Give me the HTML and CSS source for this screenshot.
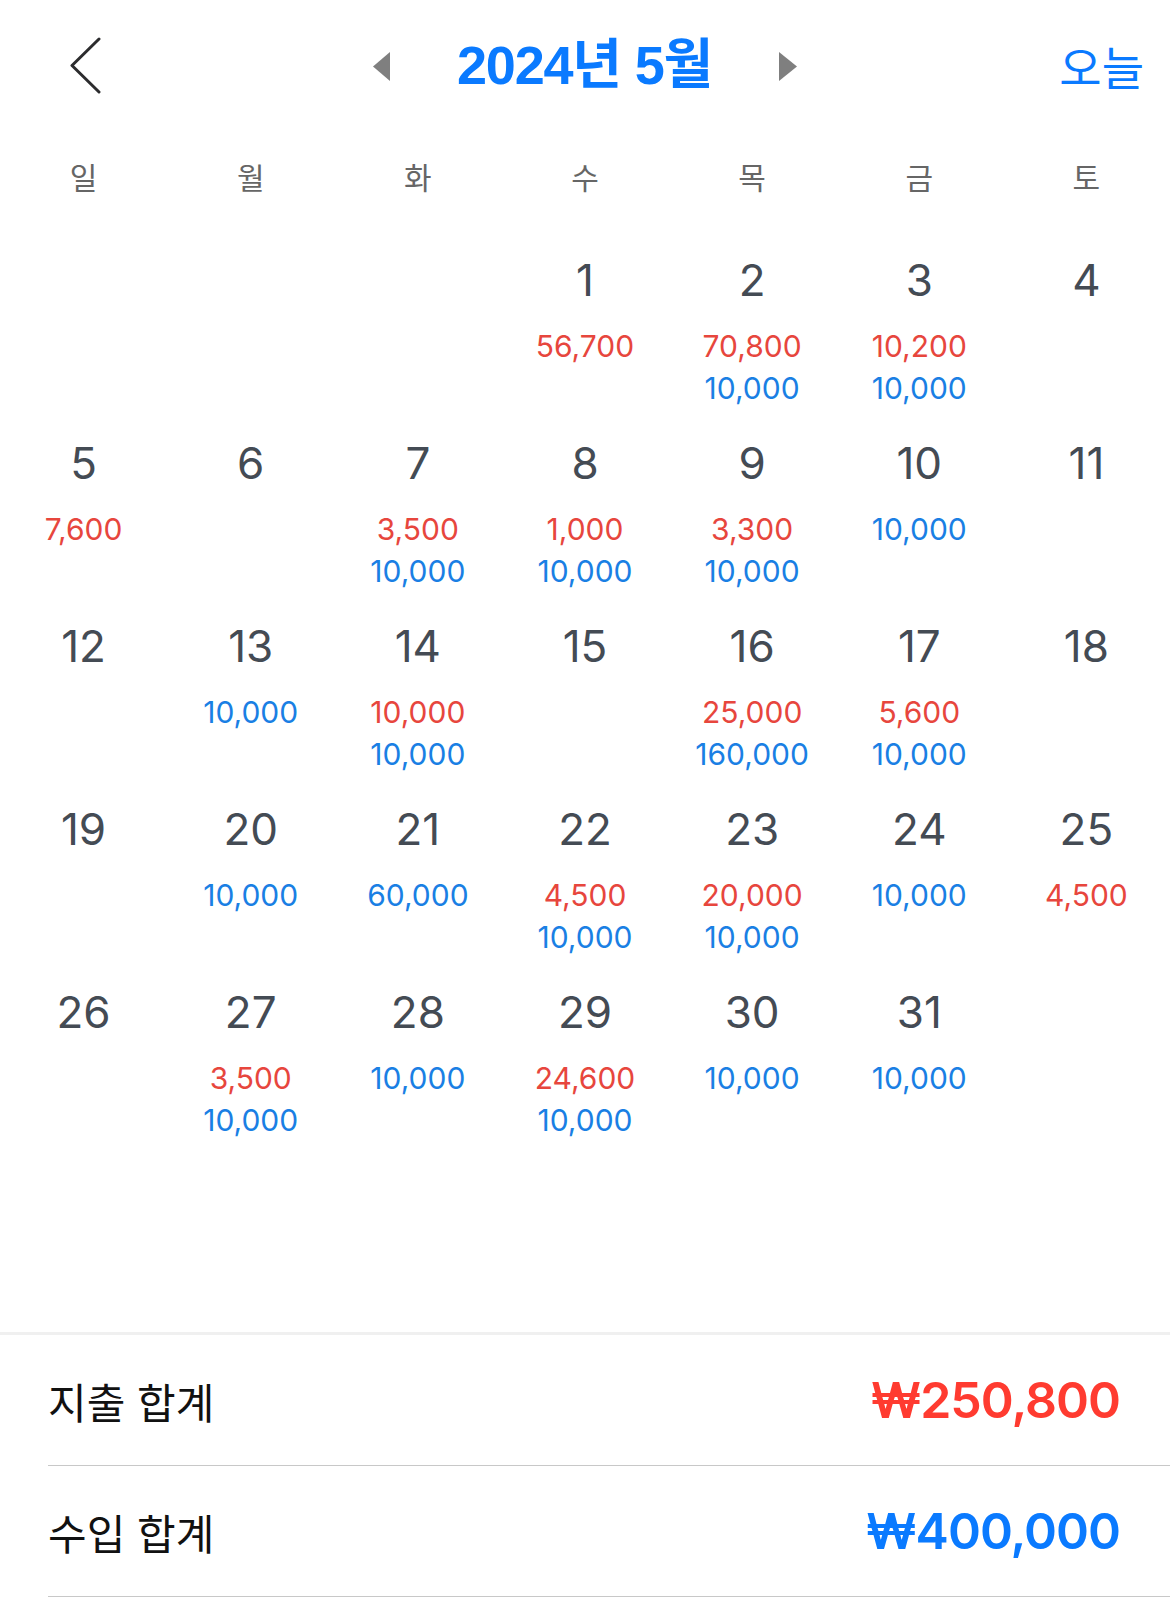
FILE: index.html
```html
<!DOCTYPE html>
<html lang="ko">
<head>
<meta charset="utf-8">
<title>2024년 5월</title>
<link rel="stylesheet" href="styles.css">
</head>
<body>
<div class="screen">
  <header class="topbar">
    <div class="left">
      <svg class="back" width="32" height="58" viewBox="0 0 32 58"><path d="M29 2 L2 28.5 L29 55" fill="none" stroke="#2c2c2e" stroke-width="3" stroke-linecap="round" stroke-linejoin="round"/></svg>
    </div>
    <div class="month-nav">
      <svg class="tri" width="17" height="29" viewBox="0 0 17 29"><polygon points="17,0 17,29 0,14.5" fill="#7f7f7f"/></svg>
      <h1 class="title">2024년 5월</h1>
      <svg class="tri" width="18" height="29" viewBox="0 0 18 29"><polygon points="0,0 0,29 18,14.5" fill="#7f7f7f"/></svg>
    </div>
    <div class="right"><span class="today">오늘</span></div>
  </header>

  <div class="weekdays">
    <div>일</div><div>월</div><div>화</div><div>수</div><div>목</div><div>금</div><div>토</div>
  </div>

  <div class="grid">
    <div class="cell"></div>
    <div class="cell"></div>
    <div class="cell"></div>
    <div class="cell"><div class="day">1</div><div class="amt out">56,700</div></div>
    <div class="cell"><div class="day">2</div><div class="amt out">70,800</div><div class="amt in">10,000</div></div>
    <div class="cell"><div class="day">3</div><div class="amt out">10,200</div><div class="amt in">10,000</div></div>
    <div class="cell"><div class="day">4</div></div>

    <div class="cell"><div class="day">5</div><div class="amt out">7,600</div></div>
    <div class="cell"><div class="day">6</div></div>
    <div class="cell"><div class="day">7</div><div class="amt out">3,500</div><div class="amt in">10,000</div></div>
    <div class="cell"><div class="day">8</div><div class="amt out">1,000</div><div class="amt in">10,000</div></div>
    <div class="cell"><div class="day">9</div><div class="amt out">3,300</div><div class="amt in">10,000</div></div>
    <div class="cell"><div class="day">10</div><div class="amt in">10,000</div></div>
    <div class="cell"><div class="day">11</div></div>

    <div class="cell"><div class="day">12</div></div>
    <div class="cell"><div class="day">13</div><div class="amt in">10,000</div></div>
    <div class="cell"><div class="day">14</div><div class="amt out">10,000</div><div class="amt in">10,000</div></div>
    <div class="cell"><div class="day">15</div></div>
    <div class="cell"><div class="day">16</div><div class="amt out">25,000</div><div class="amt in">160,000</div></div>
    <div class="cell"><div class="day">17</div><div class="amt out">5,600</div><div class="amt in">10,000</div></div>
    <div class="cell"><div class="day">18</div></div>

    <div class="cell"><div class="day">19</div></div>
    <div class="cell"><div class="day">20</div><div class="amt in">10,000</div></div>
    <div class="cell"><div class="day">21</div><div class="amt in">60,000</div></div>
    <div class="cell"><div class="day">22</div><div class="amt out">4,500</div><div class="amt in">10,000</div></div>
    <div class="cell"><div class="day">23</div><div class="amt out">20,000</div><div class="amt in">10,000</div></div>
    <div class="cell"><div class="day">24</div><div class="amt in">10,000</div></div>
    <div class="cell"><div class="day">25</div><div class="amt out">4,500</div></div>

    <div class="cell"><div class="day">26</div></div>
    <div class="cell"><div class="day">27</div><div class="amt out">3,500</div><div class="amt in">10,000</div></div>
    <div class="cell"><div class="day">28</div><div class="amt in">10,000</div></div>
    <div class="cell"><div class="day">29</div><div class="amt out">24,600</div><div class="amt in">10,000</div></div>
    <div class="cell"><div class="day">30</div><div class="amt in">10,000</div></div>
    <div class="cell"><div class="day">31</div><div class="amt in">10,000</div></div>
    <div class="cell"></div>
  </div>

  <footer class="summary">
    <div class="sum-row">
      <span class="sum-label">지출 합계</span>
      <span class="sum-value out-total">₩250,800</span>
    </div>
    <div class="sum-row">
      <span class="sum-label">수입 합계</span>
      <span class="sum-value in-total">₩400,000</span>
    </div>
  </footer>
</div>
</body>
</html>
```

FILE: styles.css
```css
* { box-sizing: border-box; }

html, body {
  margin: 0;
  padding: 0;
  background: #ffffff;
}

body {
  font-family: "Noto Sans CJK KR", "Noto Sans", sans-serif;
  color: #111111;
}

.screen {
  width: 1170px;
  height: 1599px;
  overflow: hidden;
}

/* ---------- top bar ---------- */
.topbar {
  height: 130px;
  display: grid;
  grid-template-columns: 1fr auto 1fr;
  align-items: center;
}

.left {
  padding-left: 70px;
  display: flex;
  align-items: center;
}

.back { display: block; margin-top: 2px; }

.month-nav {
  display: flex;
  align-items: center;
  gap: 67px;
}

.tri { display: block; margin-top: 3px; }

.title {
  margin: 0;
  font-family: "Liberation Sans", "Noto Sans CJK KR", sans-serif;
  font-weight: 700;
  font-size: 54px;
  line-height: 64px;
  letter-spacing: -1.2px;
  color: #0a7aff;
}

.right {
  display: flex;
  justify-content: flex-end;
  padding-right: 26px;
}

.today {
  font-size: 46px;
  line-height: 60px;
  color: #0a7aff;
}

/* ---------- weekdays ---------- */
.weekdays {
  height: 92px;
  display: grid;
  grid-template-columns: repeat(7, 1fr);
  align-items: center;
  text-align: center;
  font-size: 30px;
  color: #666666;
}

/* ---------- calendar grid ---------- */
.grid {
  display: grid;
  grid-template-columns: repeat(7, 1fr);
  grid-auto-rows: 183px;
  margin-bottom: 195px;
}

.cell {
  padding-top: 33px;
  text-align: center;
  font-family: "Inter", "Liberation Sans", sans-serif;
}

.day {
  font-size: 44px;
  line-height: 50px;
  color: #444b54;
}

.amt {
  font-size: 30px;
  line-height: 42px;
}

.day + .amt { margin-top: 20px; }

.out { color: #e7463d; }
.in { color: #1a7fe4; }

/* ---------- summary ---------- */
.summary {
  border-top: 3px solid #f0f0f0;
}

.sum-row {
  margin-left: 48px;
  padding-right: 50px;
  height: 131px;
  display: flex;
  align-items: center;
  justify-content: space-between;
  border-bottom: 1px solid #c8c8c8;
}

.sum-label {
  font-size: 42px;
  color: #111111;
}

.sum-value {
  font-family: "Inter", "Liberation Sans", sans-serif;
  font-weight: 600;
  font-size: 50px;
  letter-spacing: -1px;
}

.out-total { color: #ff3b30; }
.in-total { color: #0a7aff; }
```
